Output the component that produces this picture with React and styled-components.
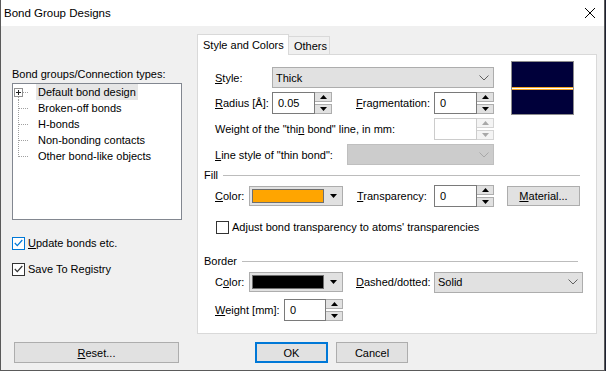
import styled, { createGlobalStyle } from "styled-components";

const GlobalStyle = createGlobalStyle`
  * { box-sizing: border-box; }
  html, body { margin: 0; padding: 0; }
  body {
    background: #1e2131;
    font-family: "Liberation Sans", Arial, sans-serif;
    font-size: 11px;
    color: #000;
  }
`;

const TreeLines = ({ first, last }) => (
  <svg width="23" height="16" viewBox="0 0 23 16">
    <g stroke="#a0a0a0" strokeDasharray="1 1" fill="none">
      {first ? (
        <>
          <line x1="5.5" y1="13" x2="5.5" y2="16" />
          <line x1="10" y1="8.5" x2="16" y2="8.5" />
        </>
      ) : (
        <>
          <line x1="5.5" y1="0" x2="5.5" y2={last ? 9 : 16} />
          <line x1="6" y1="8.5" x2="16" y2="8.5" />
        </>
      )}
    </g>
    {first && (
      <g>
        <rect x="1.5" y="4.5" width="8" height="8" fill="#fff" stroke="#919191" />
        <line x1="3" y1="8.5" x2="8" y2="8.5" stroke="#222" />
        <line x1="5.5" y1="6" x2="5.5" y2="11" stroke="#222" />
      </g>
    )}
  </svg>
);

const Check = ({ color }) => (
  <svg width="9" height="8" viewBox="0 0 9 8">
    <polyline points="0.8,4 3.3,6.6 8.3,1" fill="none" stroke={color} strokeWidth="1.2" />
  </svg>
);

const Tri = ({ up, color = "#000" }) => (
  <svg width="7" height="4" viewBox="0 0 7 4">
    <polygon points={up ? "3.5,0 7,4 0,4" : "0,0 7,0 3.5,4"} fill={color} />
  </svg>
);

const Chevron = ({ color = "#606060" }) => (
  <svg width="10" height="6" viewBox="0 0 10 6">
    <polyline points="0.5,0.5 5,5 9.5,0.5" fill="none" stroke={color} />
  </svg>
);

const Spin = ({ value, width = 60, disabled }) => (
  <SpinBox $w={width}>
    <SpinEdit $disabled={disabled}>{value}</SpinEdit>
    <SpinButtons>
      <SpinBtn $disabled={disabled}>
        <Tri up color={disabled ? "#a8a8a8" : "#000"} />
      </SpinBtn>
      <SpinBtn $disabled={disabled}>
        <Tri color={disabled ? "#a8a8a8" : "#000"} />
      </SpinBtn>
    </SpinButtons>
  </SpinBox>
);

const Combo = ({ value, width, disabled }) => (
  <ComboBox $w={width} $disabled={disabled}>
    <span>{value}</span>
    <Chevron color={disabled ? "#a8a8a8" : "#606060"} />
  </ComboBox>
);

const ColorCombo = ({ color }) => (
  <ColorBox>
    <Swatch $color={color} />
    <ArrowCell>
      <Tri />
    </ArrowCell>
  </ColorBox>
);

const treeItems = [
  "Default bond design",
  "Broken-off bonds",
  "H-bonds",
  "Non-bonding contacts",
  "Other bond-like objects",
];

export default function App() {
  return (
    <>
      <GlobalStyle />
      <Window>
        <TitleBar>
          <span>Bond Group Designs</span>
          <svg width="10" height="10" viewBox="0 0 10 10">
            <line x1="0" y1="0" x2="10" y2="10" stroke="#000" />
            <line x1="10" y1="0" x2="0" y2="10" stroke="#000" />
          </svg>
        </TitleBar>
        <Body>
          <LeftPane>
            <Caption>Bond groups/Connection types:</Caption>
            <Tree>
              {treeItems.map((t, i) => (
                <TreeRow key={t}>
                  <TreeLines first={i === 0} last={i === treeItems.length - 1} />
                  <TreeText $selected={i === 0}>{t}</TreeText>
                </TreeRow>
              ))}
            </Tree>
            <CheckRow $mt={15}>
              <CheckBox $color="#0078d7">
                <Check color="#0078d7" />
              </CheckBox>
              <span>
                <u>U</u>pdate bonds etc.
              </span>
            </CheckRow>
            <CheckRow $mt={10}>
              <CheckBox $color="#333">
                <Check color="#333" />
              </CheckBox>
              <span>Save To Registry</span>
            </CheckRow>
            <ResetButton>
              <u>R</u>eset...
            </ResetButton>
          </LeftPane>

          <RightPane>
            <TabRow>
              <Tab $active>Style and Colors</Tab>
              <Tab>Others</Tab>
            </TabRow>
            <Panel>
              <TopSection>
                <Rows>
                  <Row $h={21}>
                    <Label $w={57}>
                      <u>S</u>tyle:
                    </Label>
                    <Combo value="Thick" width={222} />
                  </Row>
                  <Row>
                    <Label $w={57}>
                      <u>R</u>adius [Å]:
                    </Label>
                    <Spin value="0.05" />
                    <Label $w={78} $ml={24}>
                      <u>F</u>ragmentation:
                    </Label>
                    <Spin value="0" />
                  </Row>
                  <Row>
                    <Label $w={219}>
                      Weight of the "thi<u>n</u> bond" line, in mm:
                    </Label>
                    <Spin value="" disabled />
                  </Row>
                  <Row $h={21}>
                    <Label $w={132}>
                      <u>L</u>ine style of "thin bond":
                    </Label>
                    <Combo value="" width={147} disabled />
                  </Row>
                </Rows>
                <Preview>
                  <svg width="61" height="52" viewBox="0 0 61 52">
                    <rect width="61" height="52" fill="#00003a" />
                    <rect y="25" width="61" height="3" fill="#f5a623" />
                    <rect y="26" width="61" height="1" fill="#ffffff" />
                  </svg>
                </Preview>
              </TopSection>

              <GroupHeader $mt={2}>
                <span>Fill</span>
                <GroupLine $mr={16} />
              </GroupHeader>
              <Indented>
                <Row $mt={2}>
                  <Label $w={34}>
                    <u>C</u>olor:
                  </Label>
                  <ColorCombo color="#ffa500" />
                  <Label $w={77} $ml={14}>
                    <u>T</u>ransparency:
                  </Label>
                  <Spin value="0" />
                  <Button $w={73} $h={20} $ml={13}>
                    <u>M</u>aterial...
                  </Button>
                </Row>
                <CheckRow $mt={12} $ml={1}>
                  <CheckBox $color="#333" />
                  <span>Adjust bond transparency to atoms' transparencies</span>
                </CheckRow>
              </Indented>

              <GroupHeader $mt={18}>
                <span>Border</span>
                <GroupLine $mr={18} />
              </GroupHeader>
              <Indented>
                <Row $mt={2}>
                  <Label $w={34}>
                    C<u>o</u>lor:
                  </Label>
                  <ColorCombo color="#000000" />
                  <Label $w={78} $ml={13}>
                    <u>D</u>ashed/dotted:
                  </Label>
                  <Combo value="Solid" width={149} />
                </Row>
                <Row $mt={6}>
                  <Label $w={69}>
                    <u>W</u>eight [mm]:
                  </Label>
                  <Spin value="0" width={59} />
                </Row>
              </Indented>
            </Panel>
            <ButtonRow>
              <Button $w={73} $primary>
                OK
              </Button>
              <Button $w={72}>Cancel</Button>
            </ButtonRow>
          </RightPane>
        </Body>
      </Window>
    </>
  );
}

const Window = styled.div`
  width: 605px;
  height: 371px;
  background: #f0f0f0;
  border: 1px solid #5a5a5a;
  border-top: none;
  display: flex;
  flex-direction: column;
`;

const TitleBar = styled.div`
  height: 26px;
  flex-shrink: 0;
  background: #fff;
  display: flex;
  align-items: center;
  justify-content: space-between;
  padding: 0 9px 0 3px;
  font-size: 11.5px;
`;

const Body = styled.div`
  flex: 1;
  display: flex;
  padding-bottom: 8px;
`;

const LeftPane = styled.div`
  width: 196px;
  display: flex;
  flex-direction: column;
  padding: 40px 0 0 11px;
`;

const Caption = styled.div`
  height: 16px;
  line-height: 16px;
`;

const Tree = styled.div`
  width: 170px;
  height: 137px;
  margin-top: 1px;
  background: #fff;
  border: 1px solid #828790;
`;

const TreeRow = styled.div`
  display: flex;
  align-items: center;
  height: 16px;

  svg {
    flex-shrink: 0;
  }
`;

const TreeText = styled.span`
  height: 16px;
  line-height: 16px;
  padding: 0 2px;
  white-space: nowrap;
  background: ${(p) => (p.$selected ? "#e6e6e6" : "transparent")};
`;

const CheckRow = styled.div`
  display: flex;
  align-items: center;
  gap: 3px;
  height: 16px;
  margin-top: ${(p) => p.$mt || 0}px;
  margin-left: ${(p) => p.$ml || 0}px;
  white-space: nowrap;
`;

const CheckBox = styled.span`
  width: 13px;
  height: 13px;
  flex-shrink: 0;
  background: #fff;
  border: 1px solid ${(p) => p.$color};
  display: inline-flex;
  align-items: center;
  justify-content: center;
`;

const Button = styled.div`
  width: ${(p) => p.$w}px;
  height: ${(p) => p.$h || 21}px;
  margin-left: ${(p) => p.$ml || 0}px;
  flex-shrink: 0;
  background: #e1e1e1;
  border: 1px solid ${(p) => (p.$primary ? "#0078d7" : "#adadad")};
  box-shadow: ${(p) => (p.$primary ? "inset 0 0 0 1px #0078d7" : "none")};
  display: flex;
  align-items: center;
  justify-content: center;
`;

const ResetButton = styled(Button)`
  width: 165px;
  margin-top: auto;
  margin-left: 2px;
`;

const RightPane = styled.div`
  width: 400px;
  display: flex;
  flex-direction: column;
  padding-top: 8px;
`;

const TabRow = styled.div`
  height: 20px;
  display: flex;
  align-items: flex-end;
`;

const Tab = styled.div`
  position: relative;
  z-index: ${(p) => (p.$active ? 1 : 0)};
  width: ${(p) => (p.$active ? 92 : 41)}px;
  height: ${(p) => (p.$active ? 21 : 18)}px;
  margin-bottom: ${(p) => (p.$active ? -1 : 0)}px;
  padding-left: 5px;
  background: ${(p) => (p.$active ? "#fff" : "#f0f0f0")};
  border: 1px solid #d9d9d9;
  border-bottom: none;
  border-left: ${(p) => (p.$active ? "1px solid #d9d9d9" : "none")};
  display: flex;
  align-items: center;
  white-space: nowrap;
`;

const Panel = styled.div`
  height: 280px;
  background: #fff;
  border: 1px solid #d9d9d9;
  padding: 6px 0 0 6px;
`;

const TopSection = styled.div`
  display: flex;
  gap: 17px;
  padding-left: 11px;
`;

const Rows = styled.div`
  width: 279px;
  padding-top: 6px;
  display: flex;
  flex-direction: column;
  gap: 4px;
`;

const Row = styled.div`
  display: flex;
  align-items: center;
  height: ${(p) => p.$h || 22}px;
  margin-top: ${(p) => p.$mt || 0}px;
`;

const Label = styled.span`
  width: ${(p) => p.$w}px;
  margin-left: ${(p) => p.$ml || 0}px;
  flex-shrink: 0;
  white-space: nowrap;
`;

const Preview = styled.div`
  width: 63px;
  height: 54px;
  border: 1px solid #8c8c8c;

  svg {
    display: block;
  }
`;

const Indented = styled.div`
  padding-left: 11px;
`;

const GroupHeader = styled.div`
  display: flex;
  align-items: center;
  gap: 5px;
  height: 16px;
  margin-top: ${(p) => p.$mt}px;
`;

const GroupLine = styled.div`
  flex: 1;
  height: 1px;
  margin-right: ${(p) => p.$mr}px;
  background: #bcbcbc;
`;

const SpinBox = styled.div`
  width: ${(p) => p.$w}px;
  height: 22px;
  flex-shrink: 0;
  display: flex;
`;

const SpinEdit = styled.div`
  flex: 1;
  background: #fff;
  border: 1px solid ${(p) => (p.$disabled ? "#cccccc" : "#7a7a7a")};
  padding-left: 5px;
  line-height: 20px;
`;

const SpinButtons = styled.div`
  width: 17px;
  display: flex;
  flex-direction: column;
  gap: 2px;
`;

const SpinBtn = styled.div`
  flex: 1;
  background: ${(p) => (p.$disabled ? "#f4f4f4" : "#e1e1e1")};
  border: 1px solid ${(p) => (p.$disabled ? "#d4d4d4" : "#adadad")};
  border-left: none;
  display: flex;
  align-items: center;
  justify-content: center;
`;

const ComboBox = styled.div`
  width: ${(p) => p.$w}px;
  height: 21px;
  flex-shrink: 0;
  background: ${(p) => (p.$disabled ? "#cccccc" : "#e1e1e1")};
  border: 1px solid ${(p) => (p.$disabled ? "#bfbfbf" : "#adadad")};
  padding: 0 4px 0 3px;
  display: flex;
  align-items: center;
  justify-content: space-between;
`;

const ColorBox = styled.div`
  width: 94px;
  height: 20px;
  flex-shrink: 0;
  background: #e1e1e1;
  border: 1px solid #adadad;
  padding: 2px 0 2px 2px;
  display: flex;
`;

const Swatch = styled.div`
  width: 72px;
  background: ${(p) => p.$color};
  border: 1px solid #6f6f6f;
`;

const ArrowCell = styled.div`
  flex: 1;
  display: flex;
  align-items: center;
  justify-content: center;
`;

const ButtonRow = styled.div`
  display: flex;
  gap: 8px;
  margin-top: 8px;
  padding-left: 58px;
`;
